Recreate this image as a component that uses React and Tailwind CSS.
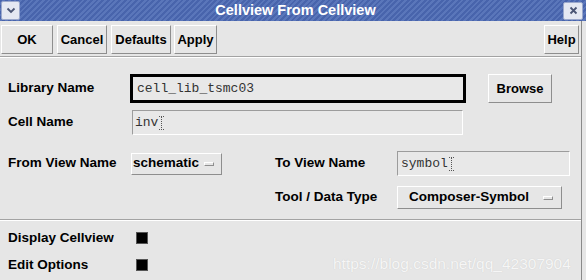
import React from 'react'

const raised =
  'border border-t-white border-l-white border-b-[#8e8e8e] border-r-[#8e8e8e] bg-[#e6e6e6]'
const sunken =
  'border border-t-[#9c9c9c] border-l-[#9c9c9c] border-b-white border-r-white bg-[#e8e8e8]'

const Button = ({ children, className = '' }) => (
  <button
    className={`${raised} h-[29px] flex items-center justify-center text-[13px] font-bold text-black ${className}`}
  >
    {children}
  </button>
)

const Cursor = () => (
  <svg width="5" height="14" viewBox="0 0 5 14" className="ml-[1px]">
    <path d="M0 0.5h5M0 13.5h5" stroke="#555" strokeWidth="1" strokeDasharray="1 1" />
    <path d="M2.5 1v12" stroke="#555" strokeWidth="1" strokeDasharray="1 1" />
  </svg>
)

const Dropdown = ({ label, className = '' }) => (
  <div
    className={`${raised} flex items-center justify-between text-[13.5px] font-bold text-black ${className}`}
  >
    <span>{label}</span>
    <span className="w-[10px] h-[4px] border border-t-white border-l-white border-b-[#8e8e8e] border-r-[#8e8e8e]" />
  </div>
)

const Separator = ({ className = '' }) => (
  <div className={`h-[2px] border-t border-t-[#a3a3a3] border-b border-b-white ${className}`} />
)

const Label = ({ children, className = '' }) => (
  <span className={`text-[13.5px] font-bold text-black ${className}`}>{children}</span>
)

export default function App() {
  return (
    <div className="relative w-[586px] h-[280px] overflow-hidden bg-[#e6e6e6] font-['Liberation_Sans',Arial,sans-serif]">
      {/* Title bar */}
      <div className="h-[21px] flex items-center bg-[repeating-linear-gradient(135deg,#4864ac_0px,#4864ac_2px,#5a76ba_2px,#5a76ba_4px)]">
        <div className="ml-[1px] w-[19px] h-[19px] flex items-center justify-center rounded-[2px] border border-[#9aa8cc] bg-[#e4e8f2]">
          <svg width="10" height="7" viewBox="0 0 10 7">
            <path d="M1.5 1.5l3.5 3.5 3.5-3.5" fill="none" stroke="#4a5574" strokeWidth="1.8" />
          </svg>
        </div>
        <div className="flex-1 text-center text-white text-[14.5px] font-bold pl-[8px]">
          Cellview From Cellview
        </div>
        <div className="mr-[3px] w-[20px] h-[18px] flex items-center justify-center rounded-[2px] border border-[#9aa8cc] bg-[#e4e8f2]">
          <svg width="9" height="9" viewBox="0 0 9 9">
            <path d="M1.5 1.5l6 6M7.5 1.5l-6 6" stroke="#4a5574" strokeWidth="1.8" />
          </svg>
        </div>
      </div>

      {/* Body */}
      <div className="w-[582px] h-[259px] border-r border-r-[#8a8a8a]">
        {/* Toolbar */}
        <div className="pt-[4px] pl-[1px] pr-[2px] flex items-center">
          <Button className="w-[52px]">OK</Button>
          <Button className="ml-[4px] w-[50px]">Cancel</Button>
          <Button className="ml-[4px] w-[60px]">Defaults</Button>
          <Button className="ml-[3px] w-[43px]">Apply</Button>
          <Button className="ml-auto w-[35px]">Help</Button>
        </div>
        <Separator className="mt-[2px]" />

        {/* Library Name */}
        <div className="mt-[16px] h-[29px] flex items-center">
          <Label className="ml-[8px] w-[122px]">Library Name</Label>
          <div className="w-[336px] h-[29px] border-[3px] border-black bg-[#e8e8e8] flex items-center pl-[4px]">
            <span className="font-['Liberation_Mono',monospace] text-[13px] text-[#333]">cell_lib_tsmc03</span>
          </div>
          <Button className="ml-[22px] w-[64px] h-[25px]">Browse</Button>
        </div>

        {/* Cell Name */}
        <div className="mt-[7px] h-[25px] flex items-center">
          <Label className="ml-[8px] w-[124px]">Cell Name</Label>
          <div className={`${sunken} w-[331px] h-[25px] flex items-center pl-[2px]`}>
            <span className="font-['Liberation_Mono',monospace] text-[13px] text-[#333]">inv</span>
            <Cursor />
          </div>
        </div>

        {/* View names */}
        <div className="mt-[16px] h-[25px] flex items-center">
          <Label className="ml-[8px] w-[123px]">From View Name</Label>
          <Dropdown label="schematic" className="w-[91px] h-[22px] pl-[1px] pr-[7px]" />
          <Label className="ml-[53px] w-[122px]">To View Name</Label>
          <div className={`${sunken} w-[173px] h-[25px] flex items-center pl-[3px]`}>
            <span className="font-['Liberation_Mono',monospace] text-[13px] text-[#333]">symbol</span>
            <Cursor />
          </div>
        </div>

        {/* Tool / Data Type */}
        <div className="mt-[10px] h-[23px] flex items-center">
          <Label className="ml-[275px] w-[122px]">Tool / Data Type</Label>
          <Dropdown label="Composer-Symbol" className="w-[165px] h-[23px] pl-[11px] pr-[8px]" />
        </div>

        <Separator className="mt-[10px]" />

        {/* Options */}
        <div className="mt-[10px] h-[14px] flex items-center">
          <Label className="ml-[8px] w-[128px]">Display Cellview</Label>
          <span className="w-[12px] h-[12px] bg-black border border-[#555]" />
        </div>
        <div className="mt-[13px] h-[14px] flex items-center">
          <Label className="ml-[8px] w-[128px]">Edit Options</Label>
          <span className="w-[12px] h-[12px] bg-black border border-[#555]" />
        </div>
      </div>

      {/* Watermark */}
      <div className="absolute left-[333px] top-[252px] text-[15.5px] text-[#f6f6f6] [text-shadow:0_0_1px_#c8c8c8]">
        https://blog.csdn.net/qq_42307904
      </div>
    </div>
  )
}
